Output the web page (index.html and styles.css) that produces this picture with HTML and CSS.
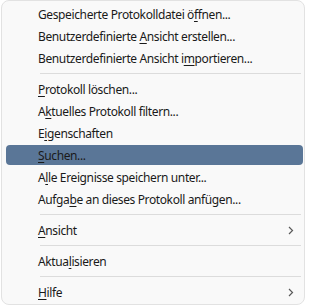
FILE: index.html
```html
<!DOCTYPE html>
<html lang="de">
<head>
  <meta charset="UTF-8" />
  <title>Kontextmenü</title>
  <link rel="stylesheet" href="styles.css">
</head>
<body>
  <div class="menu">
    <div class="item"><span>Gespeicherte Protokolldatei ö<u>f</u>fnen...</span></div>
    <div class="item"><span>Benutzerdefinierte <u>A</u>nsicht erstellen...</span></div>
    <div class="item"><span>Benutzerdefinierte Ansicht i<u>m</u>portieren...</span></div>
    <div class="sep"></div>
    <div class="item"><span><u>P</u>rotokoll löschen...</span></div>
    <div class="item"><span>A<u>k</u>tuelles Protokoll filtern...</span></div>
    <div class="item"><span>E<u>i</u>genschaften</span></div>
    <div class="item active"><span><u>S</u>uchen...</span></div>
    <div class="item"><span>A<u>l</u>le Ereignisse speichern unter...</span></div>
    <div class="item"><span>Aufga<u>b</u>e an dieses Protokoll anfügen...</span></div>
    <div class="sep"></div>
    <div class="item"><span><u>A</u>nsicht</span>
      <svg class="arrow" width="6" height="9" viewBox="0 0 6 9"><polyline points="1,1 4.5,4.5 1,8" fill="none" stroke="#5a5a5a" stroke-width="1.2"/></svg>
    </div>
    <div class="sep"></div>
    <div class="item"><span>Aktua<u>l</u>isieren</span></div>
    <div class="sep"></div>
    <div class="item"><span><u>H</u>ilfe</span>
      <svg class="arrow" width="6" height="9" viewBox="0 0 6 9"><polyline points="1,1 4.5,4.5 1,8" fill="none" stroke="#5a5a5a" stroke-width="1.2"/></svg>
    </div>
  </div>
</body>
</html>
```

FILE: styles.css
```css
body {
  margin: 0;
  background: #ffffff;
  font-family: "Noto Sans", "Liberation Sans", sans-serif;
  font-size: 12px;
  color: #1a1a1a;
}
.menu {
  box-sizing: border-box;
  width: 304px;
  height: 305px;
  margin-left: 1px;
  padding-top: 2px;
  display: flex;
  flex-direction: column;
  background: #f9f9f9;
  border: 1px solid #e2e2e2;
  border-radius: 8px;
}
.item {
  height: 20px;
  margin: 1px 1px 1px 4px;
  padding: 0 9px 0 32px;
  display: flex;
  align-items: center;
  border-radius: 4px;
  white-space: nowrap;
  letter-spacing: -0.38px;
}
.item.active {
  background: #5a7697;
}
.item u {
  text-decoration-thickness: 1px;
  text-underline-offset: 2px;
}
.arrow {
  margin-left: auto;
}
.sep {
  height: 1px;
  margin: 4px 3px 4px 38px;
  background: #dcdcdc;
}
```
